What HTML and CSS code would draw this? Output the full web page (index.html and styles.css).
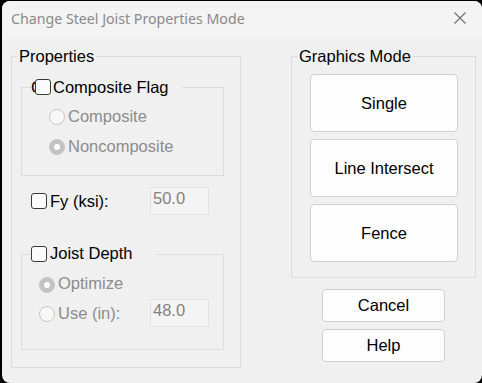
FILE: index.html
```html
<!DOCTYPE html>
<html>
<head>
<meta charset="utf-8">
<link rel="stylesheet" href="styles.css">
</head>
<body>
<div class="window">
  <div class="titlebar">
    <span class="title">Change Steel Joist Properties Mode</span>
    <svg class="close" width="12" height="12" viewBox="0 0 12 12"><path d="M0.5 0.5 L11.5 11.5 M11.5 0.5 L0.5 11.5" stroke="#6f6f6f" stroke-width="1.1" fill="none"/></svg>
  </div>
  <div class="content">
    <div class="group props">
      <div class="group-title">Properties</div>
      <div class="group composite">
        <div class="sub-title composite-title">
          <span class="ghost">C</span>
          <span class="check"></span>
          <span class="lbl">Composite Flag</span>
        </div>
        <div class="radio-row first">
          <span class="radio"></span><span class="lbl dis">Composite</span>
        </div>
        <div class="radio-row second">
          <span class="radio on"></span><span class="lbl dis">Noncomposite</span>
        </div>
      </div>
      <div class="field-row fy">
        <span class="check"></span><span class="lbl wide">Fy (ksi):</span>
        <span class="textbox">50.0</span>
      </div>
      <div class="group joist">
        <div class="sub-title joist-title">
          <span class="check"></span><span class="lbl">Joist Depth</span>
        </div>
        <div class="radio-row opt">
          <span class="radio on"></span><span class="lbl dis">Optimize</span>
        </div>
        <div class="field-row use">
          <span class="radio"></span><span class="lbl dis wide2">Use (in):</span>
          <span class="textbox">48.0</span>
        </div>
      </div>
    </div>
    <div class="right">
      <div class="group graphics">
        <div class="group-title">Graphics Mode</div>
        <div class="btn big first-btn">Single</div>
        <div class="btn big">Line Intersect</div>
        <div class="btn big">Fence</div>
      </div>
      <div class="btn small cancel">Cancel</div>
      <div class="btn small">Help</div>
    </div>
  </div>
</div>
</body>
</html>
```
FILE: styles.css
```css
* { box-sizing: border-box; }
html, body { margin: 0; padding: 0; }
body {
  background: #000;
  width: 482px;
  height: 383px;
  overflow: hidden;
  font-family: "Liberation Sans", Arial, sans-serif;
  font-size: 16.5px;
  line-height: 19px;
  color: #000;
}
.window {
  width: 480px;
  height: 382px;
  margin: 1px 0 0 2px;
  background: #f0f0f0;
  border-radius: 8px;
  overflow: hidden;
}
.titlebar {
  height: 38px;
  background: #f3f3f3;
  display: flex;
  justify-content: space-between;
  align-items: flex-start;
  padding: 0 16px 0 9px;
}
.title {
  font-family: "Noto Sans", "Open Sans", sans-serif;
  font-size: 14.2px;
  line-height: 20px;
  margin-top: 8px;
  color: #8a8a8a;
  white-space: nowrap;
}
.close { margin-top: 11px; display: block; }
.content {
  display: flex;
  align-items: flex-start;
  padding-left: 9px;
}
.group {
  border: 1px solid #dcdcdc;
}
.group-title {
  width: fit-content;
  height: 19px;
  margin: -10px 0 0 5px;
  padding: 0 2px;
  background: #f0f0f0;
  white-space: nowrap;
}
.props {
  width: 230px;
  height: 312px;
  margin-top: 17px;
}
.composite {
  width: 203px;
  height: 89px;
  margin: 21px 0 0 9px;
}
.sub-title {
  display: flex;
  align-items: flex-start;
  background: #f0f0f0;
  margin: -10px 0 0 9px;
  height: 19px;
  white-space: nowrap;
}
.composite-title { width: 151px; }
.composite-title .check { margin-top: 1px; margin-right: 2px; }
.joist-title { width: 125px; margin-top: -11px; }
.joist-title .check { margin-top: 2px; }
.ghost {
  display: inline-block;
  width: 4px;
  overflow: hidden;
}
.check {
  flex: none;
  width: 16px;
  height: 16px;
  border: 1px solid #3a3a3a;
  border-radius: 3px;
  background: #fbfbfb;
  margin-right: 3px;
}
.radio-row {
  display: flex;
  align-items: flex-start;
  height: 19px;
  margin-left: 27px;
}
.radio-row .radio { margin-top: 2px; }
.radio-row.first { margin-top: 10px; }
.radio-row.second { margin-top: 11px; }
.radio {
  flex: none;
  width: 16px;
  height: 16px;
  border: 1px solid #c6c6c6;
  border-radius: 50%;
  background: #f7f7f7;
  margin-right: 3px;
  position: relative;
}
.radio.on {
  background: #c2c2c2;
  border-color: #c2c2c2;
}
.radio.on::after {
  content: "";
  position: absolute;
  left: 4px;
  top: 4px;
  width: 6px;
  height: 6px;
  border-radius: 50%;
  background: #fff;
}
.dis { color: #8c8c8c; }
.field-row {
  display: flex;
  align-items: flex-start;
  height: 28px;
}
.fy { margin: 11px 0 0 19px; }
.fy .check { margin-top: 6px; }
.fy .lbl { margin-top: 5px; }
.wide { width: 100px; }
.wide2 { width: 92px; }
.textbox {
  width: 59px;
  height: 28px;
  border: 1px solid #e2e2e2;
  background: #f4f4f4;
  padding: 1px 2px;
  color: #838383;
}
.joist {
  width: 203px;
  height: 96px;
  margin: 39px 0 0 9px;
}
.opt { margin: 11px 0 0 17px; }
.opt .radio { margin-top: 3px; }
.use { margin: 6px 0 0 17px; }
.use .radio { margin-top: 7px; }
.use .lbl { margin-top: 5px; }
.right {
  margin-left: 50px;
  display: flex;
  flex-direction: column;
  margin-top: 17px;
}
.graphics {
  width: 185px;
  height: 222px;
}
.btn {
  background: #fdfdfd;
  border: 1px solid #d0d0d0;
  border-radius: 4px;
  display: flex;
  align-items: center;
  justify-content: center;
  color: #000;
}
.big {
  width: 148px;
  height: 58px;
  margin: 7px 0 0 18px;
}
.big.first-btn { margin-top: 8px; }
.small {
  width: 123px;
  height: 33px;
  margin: 7px 0 0 31px;
}
.small.cancel { margin-top: 11px; }
```
